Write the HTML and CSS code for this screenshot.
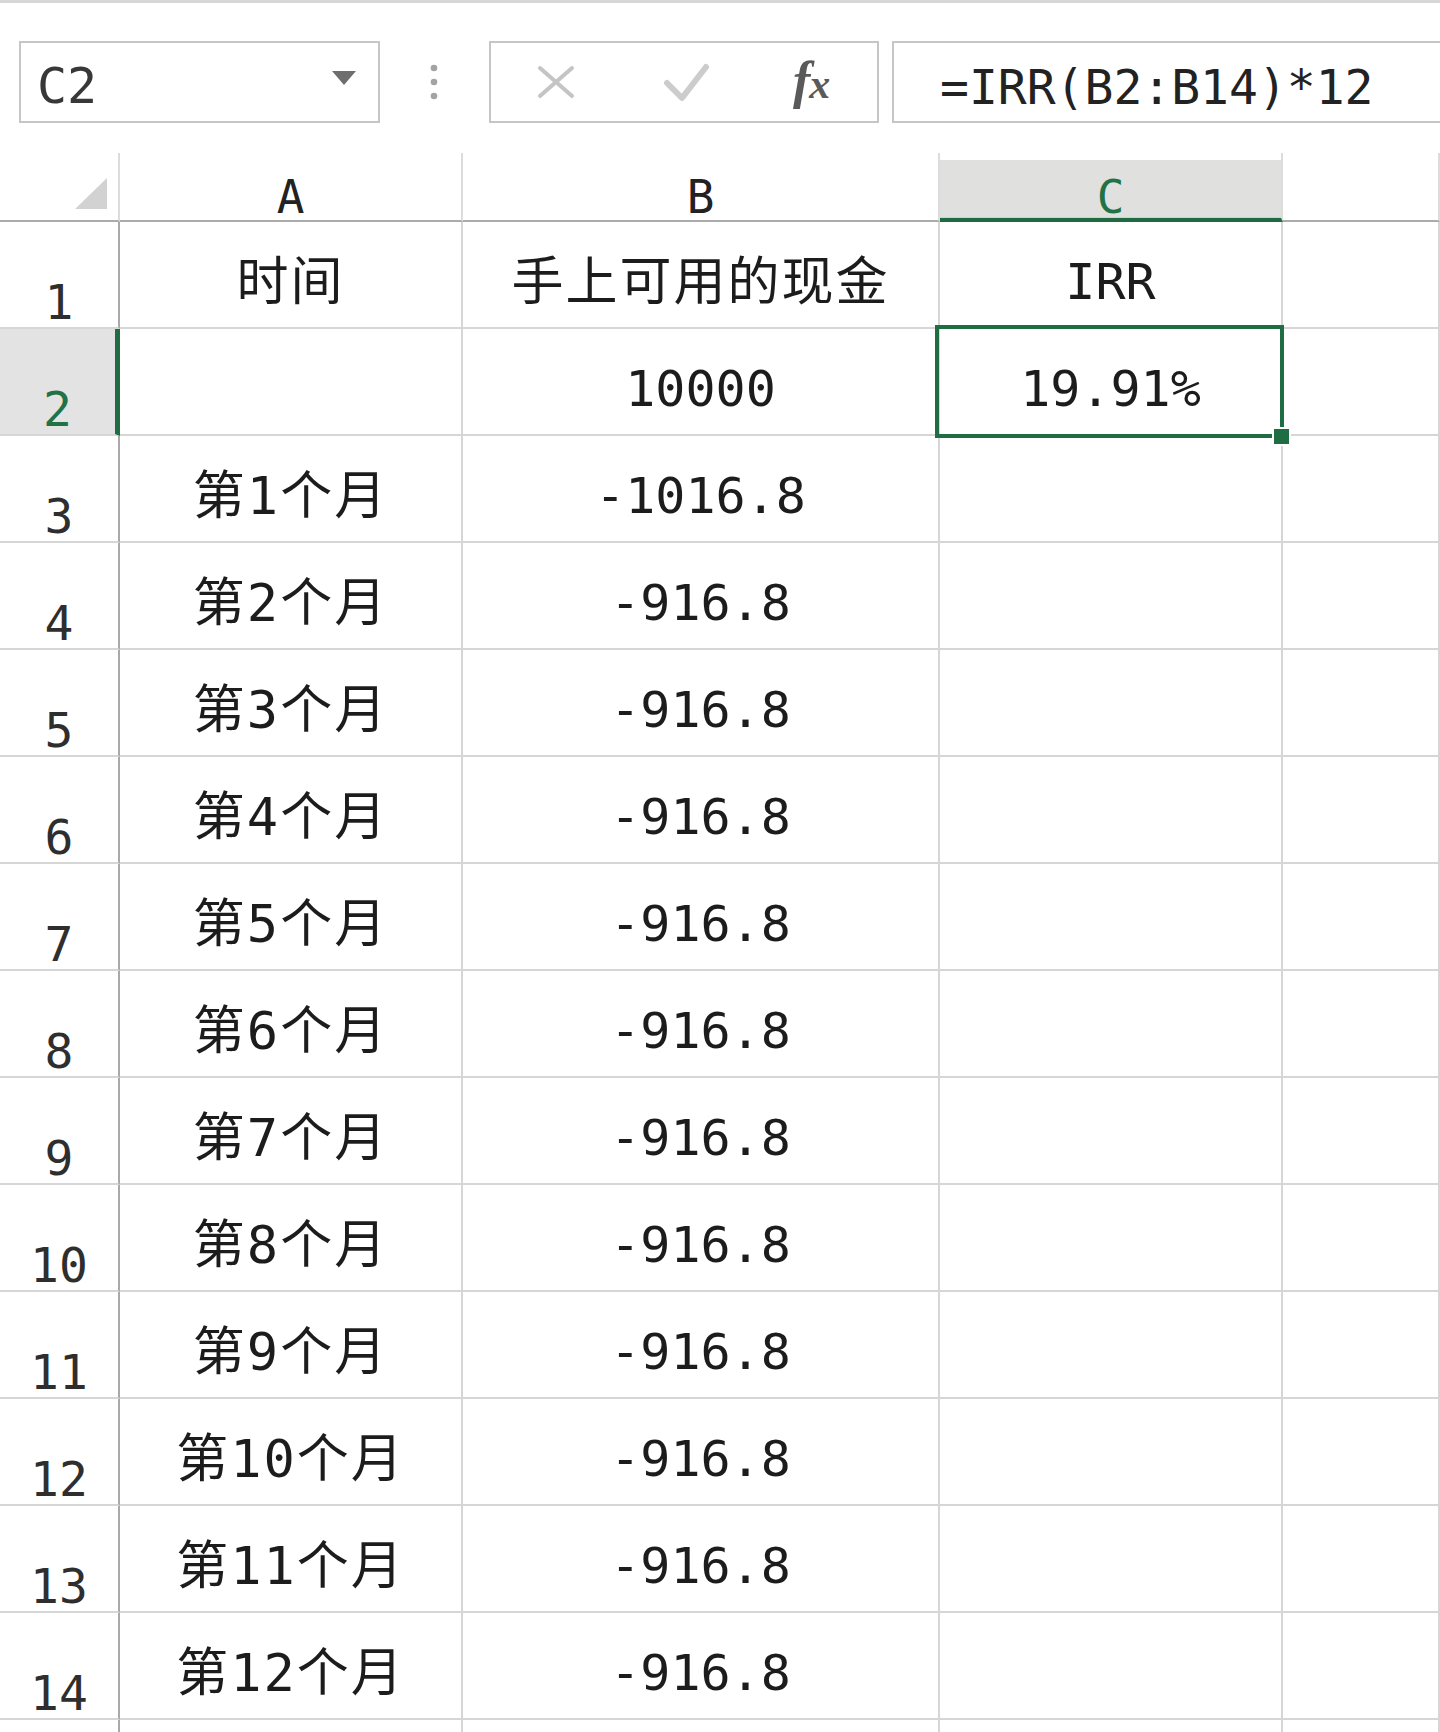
FILE: index.html
```html
<!DOCTYPE html>
<html lang="zh-CN">
<head>
<meta charset="utf-8">
<title>IRR</title>
<link rel="stylesheet" href="styles.css">
</head>
<body>
<div class="toolbar">
  <div class="namebox">
    <span class="name">C2</span>
    <svg class="caret" viewBox="0 0 24 14" width="24" height="14"><polygon points="0,0 24,0 12,14" fill="#6e6e6e"/></svg>
  </div>
  <svg class="dots" viewBox="0 0 8 36" width="8" height="36">
    <circle cx="4" cy="4" r="3.3" fill="#a3a3a3"/>
    <circle cx="4" cy="18" r="3.3" fill="#a3a3a3"/>
    <circle cx="4" cy="32" r="3.3" fill="#a3a3a3"/>
  </svg>
  <div class="fxbox">
    <svg class="ico-x" viewBox="0 0 38 34" width="38" height="34"><path d="M3 3 L35 31 M35 3 L3 31" stroke="#c4c4c4" stroke-width="4" stroke-linecap="round" fill="none"/></svg>
    <svg class="ico-check" viewBox="0 0 46 39" width="46" height="39"><path d="M4 20 L19 35 L43 4" stroke="#cccccc" stroke-width="6" stroke-linecap="round" stroke-linejoin="round" fill="none"/></svg>
    <span class="fx"><span class="fx-f">f</span><span class="fx-x">x</span></span>
  </div>
  <div class="formula">=IRR(B2:B14)*12</div>
</div>

<div class="sheet">
  <div class="corner"><svg viewBox="0 0 32 31" width="32" height="31"><polygon points="32,0 32,31 0,31" fill="#d2d2d2"/></svg></div>
  <div class="ch">A</div>
  <div class="ch">B</div>
  <div class="ch ch-sel"><span>C</span></div>
  <div class="ch"></div>

  <div class="rh">1</div>
  <div class="c cjk">时间</div>
  <div class="c cjk">手上可用的现金</div>
  <div class="c">IRR</div>
  <div class="c"></div>

  <div class="rh rh-sel">2</div>
  <div class="c"></div>
  <div class="c">10000</div>
  <div class="c c-sel">19.91%</div>
  <div class="c"></div>

  <div class="rh">3</div>
  <div class="c cjk">第1个月</div>
  <div class="c">-1016.8</div>
  <div class="c"></div>
  <div class="c"></div>

  <div class="rh">4</div>
  <div class="c cjk">第2个月</div>
  <div class="c">-916.8</div>
  <div class="c"></div>
  <div class="c"></div>

  <div class="rh">5</div>
  <div class="c cjk">第3个月</div>
  <div class="c">-916.8</div>
  <div class="c"></div>
  <div class="c"></div>

  <div class="rh">6</div>
  <div class="c cjk">第4个月</div>
  <div class="c">-916.8</div>
  <div class="c"></div>
  <div class="c"></div>

  <div class="rh">7</div>
  <div class="c cjk">第5个月</div>
  <div class="c">-916.8</div>
  <div class="c"></div>
  <div class="c"></div>

  <div class="rh">8</div>
  <div class="c cjk">第6个月</div>
  <div class="c">-916.8</div>
  <div class="c"></div>
  <div class="c"></div>

  <div class="rh">9</div>
  <div class="c cjk">第7个月</div>
  <div class="c">-916.8</div>
  <div class="c"></div>
  <div class="c"></div>

  <div class="rh">10</div>
  <div class="c cjk">第8个月</div>
  <div class="c">-916.8</div>
  <div class="c"></div>
  <div class="c"></div>

  <div class="rh">11</div>
  <div class="c cjk">第9个月</div>
  <div class="c">-916.8</div>
  <div class="c"></div>
  <div class="c"></div>

  <div class="rh">12</div>
  <div class="c cjk">第10个月</div>
  <div class="c">-916.8</div>
  <div class="c"></div>
  <div class="c"></div>

  <div class="rh">13</div>
  <div class="c cjk">第11个月</div>
  <div class="c">-916.8</div>
  <div class="c"></div>
  <div class="c"></div>

  <div class="rh">14</div>
  <div class="c cjk">第12个月</div>
  <div class="c">-916.8</div>
  <div class="c"></div>
  <div class="c"></div>

  <div class="rh last"></div>
  <div class="c last"></div>
  <div class="c last"></div>
  <div class="c last"></div>
  <div class="c last"></div>
</div>
</body>
</html>
```

FILE: styles.css
```css
html, body {
  margin: 0;
  padding: 0;
  background: #ffffff;
  width: 1440px;
  height: 1732px;
  overflow: hidden;
}

*, *::before, *::after {
  box-sizing: border-box;
}

/* ---------- formula toolbar ---------- */
.toolbar {
  display: flex;
  align-items: center;
  border-top: 3px solid #d6d6d6;
  padding: 38px 0 30px 19px;
}

.namebox {
  width: 361px;
  height: 82px;
  border: 2px solid #c6c6c6;
  display: flex;
  align-items: center;
  justify-content: space-between;
  padding: 0 22px 0 16px;
}

.name {
  font-family: "DejaVu Sans Mono", monospace;
  font-size: 50px;
  line-height: 1;
  color: #383838;
  padding-top: 7px;
}

.caret {
  display: block;
  margin-bottom: 8px;
}

.dots {
  display: block;
  margin-left: 50px;
}

.fxbox {
  margin-left: 51px;
  width: 390px;
  height: 82px;
  border: 2px solid #c6c6c6;
  display: flex;
  align-items: center;
  padding-left: 46px;
}

.ico-x {
  display: block;
}

.ico-check {
  display: block;
  margin-left: 88px;
}

.fx {
  margin-left: 84px;
  font-family: "Liberation Serif", serif;
  font-style: italic;
  font-weight: 700;
  font-size: 52px;
  line-height: 1;
  color: #5a5a5a;
  padding-bottom: 2px;
  letter-spacing: -1px;
}

.fx-x {
  font-size: 42px;
}

.formula {
  margin-left: 13px;
  margin-right: -4px;
  flex: 1;
  height: 82px;
  border: 2px solid #c6c6c6;
  display: flex;
  align-items: center;
  padding: 9px 0 0 46px;
  font-family: "DejaVu Sans Mono", monospace;
  font-size: 48px;
  line-height: 1;
  color: #222222;
  white-space: nowrap;
}

/* ---------- sheet grid ---------- */
.sheet {
  display: grid;
  grid-template-columns: 120px 343px 477px 343px 1fr;
  grid-template-rows: 69px repeat(14, 107px) 12px;
}

.corner {
  border-right: 2px solid #dcdcdc;
  border-bottom: 2px solid #ababab;
  display: flex;
  justify-content: flex-end;
  align-items: flex-end;
  padding: 0 11px 11px 0;
}

.corner svg {
  display: block;
}

.ch {
  border-right: 2px solid #dcdcdc;
  border-bottom: 2px solid #ababab;
  display: flex;
  justify-content: center;
  align-items: flex-end;
  font-family: "DejaVu Sans Mono", monospace;
  font-size: 46px;
  line-height: 1;
  color: #222222;
}

.ch-sel {
  background: linear-gradient(to bottom, #ffffff 0 7px, #e0e0df 7px calc(100% - 1px), #b9e0c9 calc(100% - 1px));
  border-bottom: 4px solid #1e6b41;
  color: #217346;
}

.ch-sel span {
  margin-bottom: -2px;
}

.rh {
  border-right: 2px solid #a9a9a9;
  border-bottom: 2px solid #d6d6d6;
  display: flex;
  justify-content: center;
  align-items: flex-end;
  padding-bottom: 1px;
  font-family: "DejaVu Sans Mono", monospace;
  font-size: 48px;
  line-height: 1;
  color: #2e2e2e;
}

.rh-sel {
  background: #e3e3e3;
  border-right: 5px solid #1f6e43;
  color: #217346;
}

.c {
  border-right: 2px solid #d6d6d6;
  border-bottom: 2px solid #d6d6d6;
  display: flex;
  justify-content: center;
  align-items: center;
  padding-top: 14px;
  font-family: "DejaVu Sans Mono", "Noto Sans CJK SC", monospace;
  font-size: 50px;
  line-height: 1;
  color: #1c1c1c;
  white-space: nowrap;
}

.last {
  border-bottom: none;
  padding: 0;
}

.cjk {
  font-size: 52px;
  letter-spacing: 2px;
}

.c-sel {
  position: relative;
}

.c-sel::before {
  content: "";
  position: absolute;
  left: -5px;
  top: -4px;
  right: -3px;
  bottom: -4px;
  border: 4px solid #1f6e43;
  z-index: 2;
}

.c-sel::after {
  content: "";
  position: absolute;
  left: 332px;
  top: 98px;
  width: 19px;
  height: 19px;
  background: #1f6e43;
  border: 2px solid #ffffff;
  z-index: 3;
}
```
